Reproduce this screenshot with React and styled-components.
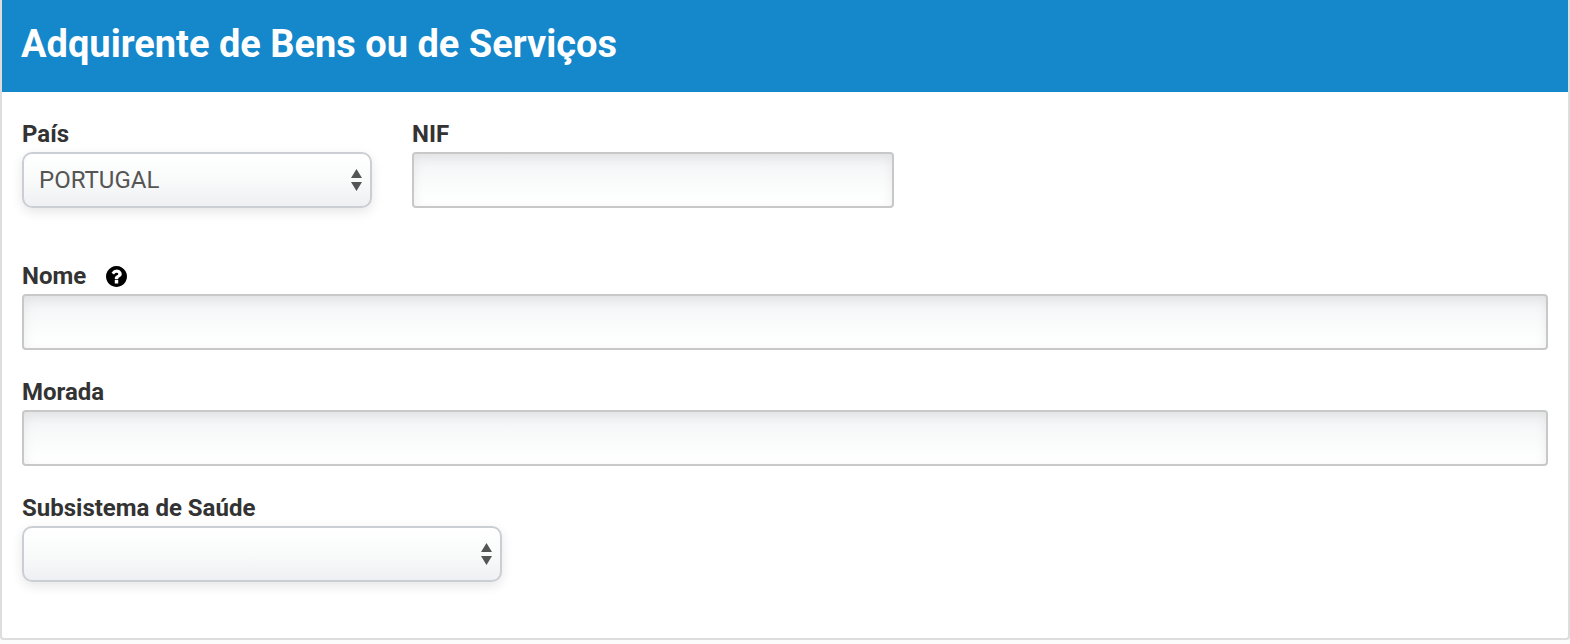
import { useState } from 'react'
import styled, { createGlobalStyle, css } from 'styled-components'

const GlobalStyle = createGlobalStyle`
  * {
    box-sizing: border-box;
  }

  body {
    margin: 0;
    background: #fcfcfc;
    color: #333;
    font-family: Roboto, 'Liberation Sans', sans-serif;
  }
`

const Panel = styled.section`
  background: white;
  border: 2px solid #ddd;
  border-top: none;
  border-radius: 0 0 4px 4px;
  box-shadow: 0 2px 2px rgba(0, 0, 0, 0.04);
`

const PanelHeader = styled.header`
  background: #1587cb;
  padding: 20px 19px 24px;
`

const Title = styled.h1`
  margin: 0;
  color: white;
  font-size: 38px;
  font-weight: 700;
  line-height: 48px;
`

const Form = styled.form`
  display: flex;
  flex-direction: column;
  gap: 24px;
  padding: 24px 20px 56px;
`

const FieldRow = styled.div`
  display: flex;
  gap: 40px;
  margin-bottom: 26px;
`

const Field = styled.div`
  width: ${({ $width }) => $width || '100%'};
`

const LabelRow = styled.div`
  display: flex;
  align-items: center;
  gap: 20px;
  height: 36px;
`

const Label = styled.label`
  font-size: 24px;
  font-weight: 700;
  line-height: 36px;
`

const HelpButton = styled.button`
  display: flex;
  padding: 0;
  border: none;
  background: none;
  color: black;
  cursor: pointer;
`

const control = css`
  display: block;
  width: 100%;
  height: 56px;
  margin: 0;
  padding: 0 15px;
  color: #555;
  font-family: inherit;
  font-size: 24px;
`

const TextInput = styled.input`
  ${control}
  border: 2px solid #c8c8c8;
  border-radius: 4px;
  background: linear-gradient(#f0f2f4, #f9fbfb 50%, #fff);
  box-shadow: inset 0 4px 12px rgba(0, 0, 0, 0.07);
`

const SelectWrapper = styled.div`
  position: relative;
`

const Select = styled.select`
  ${control}
  appearance: none;
  border: 2px solid #cbcfd4;
  border-radius: 10px;
  background: linear-gradient(#fff, #f9fafa 50%, #eff0f3);
  box-shadow: 0 4px 12px rgba(0, 0, 0, 0.1);
`

const SelectArrows = styled.svg`
  position: absolute;
  top: 17px;
  right: 10px;
  fill: #555;
  pointer-events: none;
`

const HelpIcon = () => (
  <svg width="21" height="21" viewBox="128 128 1536 1536" fill="currentColor" aria-hidden="true">
    <path d="M1024 1376v-192q0-14-9-23t-23-9h-192q-14 0-23 9t-9 23v192q0 14 9 23t23 9h192q14 0 23-9t9-23zm256-672q0-88-55.5-163t-138.5-116-170-41q-243 0-371 213-15 24 8 42l132 100q7 6 19 6 16 0 25-12 53-68 86-92 34-24 86-24 48 0 85.5 26t37.5 59q0 38-20 61t-68 45q-63 28-115.5 86.5t-52.5 125.5v36q0 14 9 23t23 9h192q14 0 23-9t9-23q0-19 21.5-49.5t54.5-49.5q32-18 49-28.5t46-35 44.5-48 28-60.5 12.5-81zm384 192q0 209-103 385.5t-279.5 279.5-385.5 103-385.5-103-279.5-279.5-103-385.5 103-385.5 279.5-279.5 385.5-103 385.5 103 279.5 279.5 103 385.5z" />
  </svg>
)

const SelectField = ({ id, label, width, children, ...props }) => (
  <Field $width={width}>
    <LabelRow>
      <Label htmlFor={id}>{label}</Label>
    </LabelRow>
    <SelectWrapper>
      <Select id={id} name={id} {...props}>
        {children}
      </Select>
      <SelectArrows width="11" height="22" viewBox="0 0 11 22" aria-hidden="true">
        <path d="M5.5 0L11 9H0zM0 13h11l-5.5 9z" />
      </SelectArrows>
    </SelectWrapper>
  </Field>
)

const TextField = ({ id, label, width, help, ...props }) => (
  <Field $width={width}>
    <LabelRow>
      <Label htmlFor={id}>{label}</Label>
      {help && (
        <HelpButton type="button" aria-label="Ajuda">
          <HelpIcon />
        </HelpButton>
      )}
    </LabelRow>
    <TextInput id={id} name={id} type="text" {...props} />
  </Field>
)

const App = () => {
  const [values, setValues] = useState({
    pais: 'PT',
    nif: '',
    nome: '',
    morada: '',
    subsistema: ''
  })

  const handleChange = (e) => {
    const { name, value } = e.target
    setValues((prev) => ({ ...prev, [name]: value }))
  }

  return (
    <>
      <GlobalStyle />
      <Panel>
        <PanelHeader>
          <Title>Adquirente de Bens ou de Serviços</Title>
        </PanelHeader>

        <Form onSubmit={(e) => e.preventDefault()}>
          <FieldRow>
            <SelectField id="pais" label="País" width="350px" value={values.pais} onChange={handleChange}>
              <option value="PT">PORTUGAL</option>
            </SelectField>
            <TextField id="nif" label="NIF" width="482px" value={values.nif} onChange={handleChange} />
          </FieldRow>
          <TextField id="nome" label="Nome" help value={values.nome} onChange={handleChange} />
          <TextField id="morada" label="Morada" value={values.morada} onChange={handleChange} />
          <SelectField
            id="subsistema"
            label="Subsistema de Saúde"
            width="480px"
            value={values.subsistema}
            onChange={handleChange}
          >
            <option value=""></option>
          </SelectField>
        </Form>
      </Panel>
    </>
  )
}

export default App
